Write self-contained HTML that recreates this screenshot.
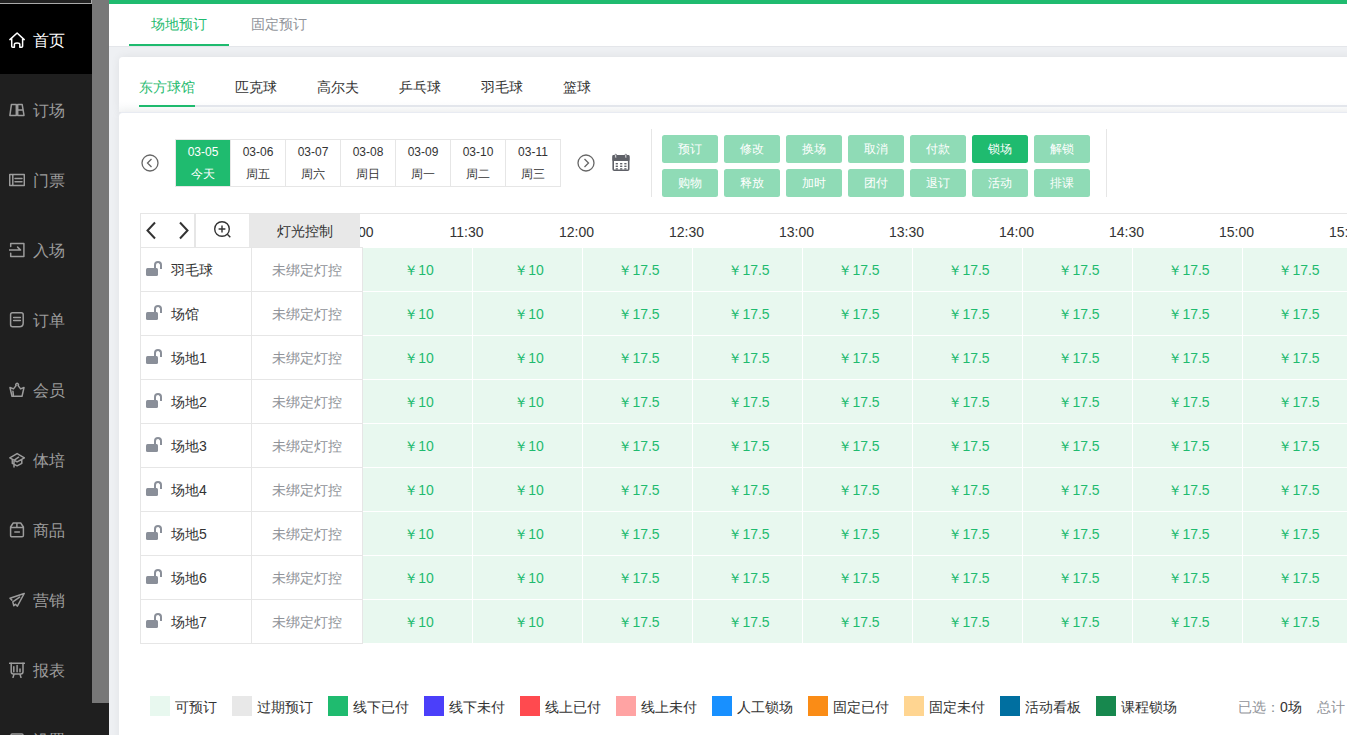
<!DOCTYPE html>
<html><head><meta charset="utf-8">
<style>
*{box-sizing:border-box;margin:0;padding:0}
html,body{width:1347px;height:735px;overflow:hidden;background:#eef0f3;font-family:"Liberation Sans",sans-serif;position:relative}
.abs{position:absolute}
#side{left:0;top:0;width:92px;height:735px;background:#1f1f1f}
#side .topbox{left:0;top:0;width:92px;height:4px;background:#212121;border-right:1px solid #a9a9a9;border-bottom:1px solid #a9a9a9}
#side .act{left:0;top:4px;width:92px;height:70px;background:#000}
.mi{position:absolute;left:0;width:92px;height:70px;color:#959595;font-size:16px}
.mi svg{position:absolute;left:9px;top:28px;width:16px;height:16px}
.mi span{position:absolute;left:33px;top:28px;line-height:18px;white-space:nowrap}
#sb{left:92px;top:0;width:17px;height:703px;background:#787878}
#sbt{left:92px;top:703px;width:17px;height:32px;background:#1f1f1f}
#greenbar{left:109px;top:0;width:1238px;height:4px;background:#1fbb6f}
#hdr{left:109px;top:4px;width:1238px;height:43px;background:#fff;border-bottom:1px solid #e4e6ea}
.t1{position:absolute;top:12px;font-size:14px;line-height:16px;white-space:nowrap}
#card1{left:119px;top:57px;width:1240px;height:55px;background:linear-gradient(to bottom,#fff 0,#fff 44px,#f7f8f9 55px);border-radius:4px 0 0 0;box-shadow:0 0 10px rgba(0,0,0,.07)}
#card2{left:119px;top:112px;width:1240px;height:640px;background:#fff;border-top:1px solid #e8ebf2;border-radius:4px 0 0 0;box-shadow:0 0 10px rgba(0,0,0,.06)}
.t2{position:absolute;top:22px;font-size:14px;line-height:16px;color:#333;white-space:nowrap}
.dc{position:absolute;top:139px;width:56px;height:48px;border:1px solid #e6e6e6;background:#fff;color:#333;text-align:center;font-size:12px}
.dc .d1{position:absolute;left:0;right:0;top:5px;line-height:14px}
.dc .d2{position:absolute;left:0;right:0;top:27px;line-height:14px}
.dc.on{background:#1fbb6f;border-right-color:#1fbb6f;color:#fff}
.btn{position:absolute;width:56px;height:28px;border-radius:2.5px;background:#8fdbb6;color:#fff;font-size:12px;line-height:28px;text-align:center}
.btn.on{background:#1fbb6f}
.tm{position:absolute;top:224px;width:80px;text-align:center;font-size:14px;line-height:16px;color:#333}
.rw{position:absolute;left:140px;width:222px;height:45px}
.c1{position:absolute;left:0;top:0;width:112px;height:45px;border:1px solid #e6e6e6;background:#fff}
.c1 span{position:absolute;left:30px;top:14px;font-size:14px;line-height:16px;color:#333;white-space:nowrap}
.c2{position:absolute;left:111px;top:0;width:112px;height:45px;border:1px solid #e6e6e6;background:#fff;text-align:center;font-size:14px;line-height:44px;color:#909399}
.lk{position:absolute;left:5px;top:20px;width:12px;height:8px;background:#8a8f99;border-radius:1.5px}
.lk:before{content:"";position:absolute;left:8px;top:-7px;width:8px;height:8px;border:2.5px solid #8a8f99;border-bottom:none;border-radius:5px 5px 0 0;box-sizing:border-box}
.sl{position:absolute;width:110px;height:44px;background:#e8f8ef;border-right:1px solid #fff;border-bottom:1px solid #fff;text-align:center;font-size:14px;line-height:45px;text-indent:3px;color:#1fbb6f}
.lg{position:absolute;top:696px;height:20px;white-space:nowrap}
.lg i{position:absolute;left:0;top:0;width:20px;height:20px}
.lg span{position:absolute;left:25px;top:3px;font-size:14px;line-height:16px;color:#333}
</style></head>
<body>
<div id="side" class="abs">
  <div class="abs topbox"></div>
  <div class="abs act"></div>
<div class="mi" style="top:4px;color:#fff"><svg viewBox="0 0 16 16"><path d="M0.9 7.6 L8.1 1 L15.2 7.6 M2.7 6.2 V14.2 Q2.7 15.2 3.7 15.2 H5.4 V12.3 Q5.4 10.9 8.1 10.9 Q10.8 10.9 10.8 12.3 V15.2 H12.5 Q13.6 15.2 13.6 14.2 V6.2" fill="none" stroke="currentColor" stroke-width="1.5" stroke-linejoin="round" stroke-linecap="round"/></svg><span>首页</span></div>
<div class="mi" style="top:74px;color:#9c9c9c"><svg viewBox="0 0 16 16"><path d="M2.4 2.6 H7.3 V13.4 H0.9 Z M8.7 2.6 H13.2 L15 13.4 H8.7 Z M8.7 8 H14.1" fill="none" stroke="currentColor" stroke-width="1.5" stroke-linejoin="round" stroke-linecap="round" stroke-width="1.4"/></svg><span>订场</span></div>
<div class="mi" style="top:144px;color:#9c9c9c"><svg viewBox="0 0 16 16"><path d="M0.7 2.6 H15.3 V13.4 H0.7 Z M3.8 2.6 V13.4 M6 6.4 H13 M6 9.7 H13" fill="none" stroke="currentColor" stroke-width="1.5" stroke-linejoin="round" stroke-linecap="round" stroke-width="1.4"/></svg><span>门票</span></div>
<div class="mi" style="top:214px;color:#9c9c9c"><svg viewBox="0 0 16 16"><path d="M1.7 4.6 V1.4 H14.9 V14.4 H1.7 V11.2 M0.2 7.9 H11.6 M8.6 5.1 L11.4 7.9" fill="none" stroke="currentColor" stroke-width="1.5" stroke-linejoin="round" stroke-linecap="round" stroke-width="1.4"/></svg><span>入场</span></div>
<div class="mi" style="top:284px;color:#9c9c9c"><svg viewBox="0 0 16 16"><path d="M3.4 0.8 H12.2 Q14.2 0.8 14.2 2.8 V11 Q14.2 14.8 10.4 14.8 H3.6 Q1.6 14.8 1.6 12.8 V2.8 Q1.6 0.8 3.4 0.8 Z M4.6 5.6 H11.4 M4.6 8.6 H11.4" fill="none" stroke="currentColor" stroke-width="1.5" stroke-linejoin="round" stroke-linecap="round"/></svg><span>订单</span></div>
<div class="mi" style="top:354px;color:#9c9c9c"><svg viewBox="0 0 16 16"><path d="M1 5.5 L4.5 6.9 L7.1 3.6 A1.3 1.3 0 1 1 9.1 3.6 L11.6 6.9 L15 5.5 L13 14.3 H3 Z M3.9 9.2 L4.4 13" fill="none" stroke="currentColor" stroke-width="1.5" stroke-linejoin="round" stroke-linecap="round"/></svg><span>会员</span></div>
<div class="mi" style="top:424px;color:#9c9c9c"><svg viewBox="0 0 16 16"><path d="M0.8 5.8 L8.1 1.6 L15.4 5.8 L8.1 9.8 Z M3.3 7.3 V11.3 L8.1 13.8 L12.8 11.3 V7.3 M9.6 5.2 L5 8.3 V15" fill="none" stroke="currentColor" stroke-width="1.5" stroke-linejoin="round" stroke-linecap="round"/></svg><span>体培</span></div>
<div class="mi" style="top:494px;color:#9c9c9c"><svg viewBox="0 0 16 16"><path d="M4.2 1 H11.7 L14.4 5 V13.4 Q14.4 14.8 13 14.8 H3 Q1.6 14.8 1.6 13.4 V5 Z M1.6 5.6 H14.4 M7.9 1 V5.6 M5.8 10 H10.4" fill="none" stroke="currentColor" stroke-width="1.5" stroke-linejoin="round" stroke-linecap="round"/></svg><span>商品</span></div>
<div class="mi" style="top:564px;color:#9c9c9c"><svg viewBox="0 0 16 16"><path d="M15.2 1.5 L1 6.3 L2.9 8.1 M15.2 1.5 L8.4 14.2 L6.5 12.2 L4.8 13.8 L3.8 9.8 L10.6 5.1" fill="none" stroke="currentColor" stroke-width="1.5" stroke-linejoin="round" stroke-linecap="round"/></svg><span>营销</span></div>
<div class="mi" style="top:634px;color:#9c9c9c"><svg viewBox="0 0 16 16"><path d="M0.4 1.3 H15.6" fill="none" stroke="currentColor" stroke-width="1.5" stroke-linejoin="round" stroke-linecap="round" stroke-width="1.9"/><path d="M2.2 1.3 V9.8 Q2.2 12 4.4 12 H11.8 Q14 12 14 9.8 V1.3 M5.1 12 L4 15.4 M10.9 12 L12 15.4 M4.8 4.8 V9.7 M8.1 3.5 V9.7 M11 7 V9.7" fill="none" stroke="currentColor" stroke-width="1.5" stroke-linejoin="round" stroke-linecap="round" stroke-width="1.4"/></svg><span>报表</span></div>
<div class="mi" style="top:704px;color:#9c9c9c"><svg viewBox="0 0 16 16"><path d="M3 2 H13 Q14 2 14 3 V14 H2 V3 Q2 2 3 2 Z" fill="none" stroke="currentColor" stroke-width="1.5" stroke-linejoin="round" stroke-linecap="round"/></svg><span>设置</span></div>
</div>
<div id="sb" class="abs"></div>
<div id="sbt" class="abs"></div>
<div id="greenbar" class="abs"></div>
<div id="hdr" class="abs">
  <div class="t1" style="left:42px;color:#1fbb6f">场地预订</div>
  <div class="t1" style="left:142px;color:#909399">固定预订</div>
  <div class="abs" style="left:20px;top:40px;width:100px;height:2px;background:#1fbb6f"></div>
</div>
<div id="card1" class="abs">
  <div class="t2" style="left:20px;color:#1fbb6f">东方球馆</div>
  <div class="t2" style="left:116px">匹克球</div>
  <div class="t2" style="left:198px">高尔夫</div>
  <div class="t2" style="left:280px">乒乓球</div>
  <div class="t2" style="left:362px">羽毛球</div>
  <div class="t2" style="left:444px">篮球</div>
  <div class="abs" style="left:20px;top:48px;width:1220px;height:2px;background:#e4e7ed"></div>
  <div class="abs" style="left:20px;top:48px;width:56px;height:2px;background:#1fbb6f"></div>
</div>
<div id="card2" class="abs"></div>
<!-- date nav -->
<svg class="abs" style="left:140px;top:153px" width="20" height="20" viewBox="0 0 20 20"><circle cx="10" cy="10" r="8" fill="none" stroke="#666" stroke-width="1.3"/><path d="M11.5 6 L7.5 10 L11.5 14" fill="none" stroke="#666" stroke-width="1.3"/></svg>
<div class="dc on" style="left:175px"><div class="d1">03-05</div><div class="d2">今天</div></div>
<div class="dc" style="left:230px"><div class="d1">03-06</div><div class="d2">周五</div></div>
<div class="dc" style="left:285px"><div class="d1">03-07</div><div class="d2">周六</div></div>
<div class="dc" style="left:340px"><div class="d1">03-08</div><div class="d2">周日</div></div>
<div class="dc" style="left:395px"><div class="d1">03-09</div><div class="d2">周一</div></div>
<div class="dc" style="left:450px"><div class="d1">03-10</div><div class="d2">周二</div></div>
<div class="dc" style="left:505px"><div class="d1">03-11</div><div class="d2">周三</div></div>
<svg class="abs" style="left:576px;top:153px" width="20" height="20" viewBox="0 0 20 20"><circle cx="10" cy="10" r="8" fill="none" stroke="#666" stroke-width="1.3"/><path d="M8.5 6 L12.5 10 L8.5 14" fill="none" stroke="#666" stroke-width="1.3"/></svg>
<svg class="abs" style="left:612px;top:153px" width="19" height="20" viewBox="0 0 19 20"><rect x="1.2" y="2.9" width="15.5" height="14.3" rx="1" fill="none" stroke="#5f6168" stroke-width="1.6"/><rect x="0.4" y="2.1" width="17.1" height="6" rx="1" fill="#5f6168"/><rect x="2.9" y="1.3" width="1.7" height="3.6" rx="0.6" fill="#fff" stroke="#5f6168" stroke-width="0.8"/><rect x="13" y="1.3" width="1.7" height="3.6" rx="0.6" fill="#fff" stroke="#5f6168" stroke-width="0.8"/><g fill="#5f6168"><rect x="3.7" y="10.0" width="2.2" height="1.4"/><rect x="8.1" y="10.0" width="2.2" height="1.4"/><rect x="12.3" y="10.0" width="2.2" height="1.4"/><rect x="3.7" y="12.6" width="2.2" height="1.4"/><rect x="8.1" y="12.6" width="2.2" height="1.4"/><rect x="12.3" y="12.6" width="2.2" height="1.4"/><rect x="3.7" y="15.2" width="2.2" height="1.4"/><rect x="8.1" y="15.2" width="2.2" height="1.4"/><rect x="12.3" y="15.2" width="2.2" height="1.4"/></g></svg>
<div class="abs" style="left:651px;top:129px;width:1px;height:68px;background:#e6e6e6"></div>
<div class="abs" style="left:1106px;top:129px;width:1px;height:68px;background:#e6e6e6"></div>
<div class="btn" style="left:662px;top:135px">预订</div>
<div class="btn" style="left:724px;top:135px">修改</div>
<div class="btn" style="left:786px;top:135px">换场</div>
<div class="btn" style="left:848px;top:135px">取消</div>
<div class="btn" style="left:910px;top:135px">付款</div>
<div class="btn on" style="left:972px;top:135px">锁场</div>
<div class="btn" style="left:1034px;top:135px">解锁</div>
<div class="btn" style="left:662px;top:169px">购物</div>
<div class="btn" style="left:724px;top:169px">释放</div>
<div class="btn" style="left:786px;top:169px">加时</div>
<div class="btn" style="left:848px;top:169px">团付</div>
<div class="btn" style="left:910px;top:169px">退订</div>
<div class="btn" style="left:972px;top:169px">活动</div>
<div class="btn" style="left:1034px;top:169px">排课</div>
<!-- table header -->
<div class="abs" style="left:140px;top:213px;width:1207px;height:35px;border-top:1px solid #e6e6e6;background:#fff"></div>
<div class="tm" style="left:316.5px">11:00</div>
<div class="tm" style="left:426.5px">11:30</div>
<div class="tm" style="left:536.5px">12:00</div>
<div class="tm" style="left:646.5px">12:30</div>
<div class="tm" style="left:756.5px">13:00</div>
<div class="tm" style="left:866.5px">13:30</div>
<div class="tm" style="left:976.5px">14:00</div>
<div class="tm" style="left:1086.5px">14:30</div>
<div class="tm" style="left:1196.5px">15:00</div>
<div class="tm" style="left:1306.5px">15:30</div>
<div class="abs" style="left:140px;top:213px;width:55px;height:35px;border:1px solid #e6e6e6;background:#fff"></div>
<div class="abs" style="left:195px;top:213px;width:55px;height:35px;border:1px solid #e6e6e6;background:#fff"></div>
<svg class="abs" style="left:145px;top:221px" width="45" height="19" viewBox="0 0 45 19"><path d="M10 1.5 L2.5 9.5 L10 17.5" fill="none" stroke="#333" stroke-width="2"/><path d="M35 1.5 L42.5 9.5 L35 17.5" fill="none" stroke="#333" stroke-width="2"/></svg>
<svg class="abs" style="left:212px;top:219px" width="22" height="22" viewBox="0 0 22 22"><circle cx="10" cy="10" r="7.3" fill="none" stroke="#333" stroke-width="1.4"/><path d="M10 6.6 V13.4 M6.6 10 H13.4" stroke="#333" stroke-width="1.4"/><path d="M15.3 15.3 L18.3 18.3" stroke="#333" stroke-width="1.4"/></svg>
<div class="abs" style="left:249px;top:213px;width:111px;height:35px;background:#e8e8e8;border-top:1px solid #e6e6e6;text-align:center;font-size:14px;line-height:35px;color:#333">灯光控制</div>
<div class="rw" style="top:247px"><div class="c1"><i class="lk"></i><span>羽毛球</span></div><div class="c2">未绑定灯控</div></div>
<div class="sl" style="left:363px;top:248px">￥10</div>
<div class="sl" style="left:473px;top:248px">￥10</div>
<div class="sl" style="left:583px;top:248px">￥17.5</div>
<div class="sl" style="left:693px;top:248px">￥17.5</div>
<div class="sl" style="left:803px;top:248px">￥17.5</div>
<div class="sl" style="left:913px;top:248px">￥17.5</div>
<div class="sl" style="left:1023px;top:248px">￥17.5</div>
<div class="sl" style="left:1133px;top:248px">￥17.5</div>
<div class="sl" style="left:1243px;top:248px">￥17.5</div>
<div class="rw" style="top:291px"><div class="c1"><i class="lk"></i><span>场馆</span></div><div class="c2">未绑定灯控</div></div>
<div class="sl" style="left:363px;top:292px">￥10</div>
<div class="sl" style="left:473px;top:292px">￥10</div>
<div class="sl" style="left:583px;top:292px">￥17.5</div>
<div class="sl" style="left:693px;top:292px">￥17.5</div>
<div class="sl" style="left:803px;top:292px">￥17.5</div>
<div class="sl" style="left:913px;top:292px">￥17.5</div>
<div class="sl" style="left:1023px;top:292px">￥17.5</div>
<div class="sl" style="left:1133px;top:292px">￥17.5</div>
<div class="sl" style="left:1243px;top:292px">￥17.5</div>
<div class="rw" style="top:335px"><div class="c1"><i class="lk"></i><span>场地1</span></div><div class="c2">未绑定灯控</div></div>
<div class="sl" style="left:363px;top:336px">￥10</div>
<div class="sl" style="left:473px;top:336px">￥10</div>
<div class="sl" style="left:583px;top:336px">￥17.5</div>
<div class="sl" style="left:693px;top:336px">￥17.5</div>
<div class="sl" style="left:803px;top:336px">￥17.5</div>
<div class="sl" style="left:913px;top:336px">￥17.5</div>
<div class="sl" style="left:1023px;top:336px">￥17.5</div>
<div class="sl" style="left:1133px;top:336px">￥17.5</div>
<div class="sl" style="left:1243px;top:336px">￥17.5</div>
<div class="rw" style="top:379px"><div class="c1"><i class="lk"></i><span>场地2</span></div><div class="c2">未绑定灯控</div></div>
<div class="sl" style="left:363px;top:380px">￥10</div>
<div class="sl" style="left:473px;top:380px">￥10</div>
<div class="sl" style="left:583px;top:380px">￥17.5</div>
<div class="sl" style="left:693px;top:380px">￥17.5</div>
<div class="sl" style="left:803px;top:380px">￥17.5</div>
<div class="sl" style="left:913px;top:380px">￥17.5</div>
<div class="sl" style="left:1023px;top:380px">￥17.5</div>
<div class="sl" style="left:1133px;top:380px">￥17.5</div>
<div class="sl" style="left:1243px;top:380px">￥17.5</div>
<div class="rw" style="top:423px"><div class="c1"><i class="lk"></i><span>场地3</span></div><div class="c2">未绑定灯控</div></div>
<div class="sl" style="left:363px;top:424px">￥10</div>
<div class="sl" style="left:473px;top:424px">￥10</div>
<div class="sl" style="left:583px;top:424px">￥17.5</div>
<div class="sl" style="left:693px;top:424px">￥17.5</div>
<div class="sl" style="left:803px;top:424px">￥17.5</div>
<div class="sl" style="left:913px;top:424px">￥17.5</div>
<div class="sl" style="left:1023px;top:424px">￥17.5</div>
<div class="sl" style="left:1133px;top:424px">￥17.5</div>
<div class="sl" style="left:1243px;top:424px">￥17.5</div>
<div class="rw" style="top:467px"><div class="c1"><i class="lk"></i><span>场地4</span></div><div class="c2">未绑定灯控</div></div>
<div class="sl" style="left:363px;top:468px">￥10</div>
<div class="sl" style="left:473px;top:468px">￥10</div>
<div class="sl" style="left:583px;top:468px">￥17.5</div>
<div class="sl" style="left:693px;top:468px">￥17.5</div>
<div class="sl" style="left:803px;top:468px">￥17.5</div>
<div class="sl" style="left:913px;top:468px">￥17.5</div>
<div class="sl" style="left:1023px;top:468px">￥17.5</div>
<div class="sl" style="left:1133px;top:468px">￥17.5</div>
<div class="sl" style="left:1243px;top:468px">￥17.5</div>
<div class="rw" style="top:511px"><div class="c1"><i class="lk"></i><span>场地5</span></div><div class="c2">未绑定灯控</div></div>
<div class="sl" style="left:363px;top:512px">￥10</div>
<div class="sl" style="left:473px;top:512px">￥10</div>
<div class="sl" style="left:583px;top:512px">￥17.5</div>
<div class="sl" style="left:693px;top:512px">￥17.5</div>
<div class="sl" style="left:803px;top:512px">￥17.5</div>
<div class="sl" style="left:913px;top:512px">￥17.5</div>
<div class="sl" style="left:1023px;top:512px">￥17.5</div>
<div class="sl" style="left:1133px;top:512px">￥17.5</div>
<div class="sl" style="left:1243px;top:512px">￥17.5</div>
<div class="rw" style="top:555px"><div class="c1"><i class="lk"></i><span>场地6</span></div><div class="c2">未绑定灯控</div></div>
<div class="sl" style="left:363px;top:556px">￥10</div>
<div class="sl" style="left:473px;top:556px">￥10</div>
<div class="sl" style="left:583px;top:556px">￥17.5</div>
<div class="sl" style="left:693px;top:556px">￥17.5</div>
<div class="sl" style="left:803px;top:556px">￥17.5</div>
<div class="sl" style="left:913px;top:556px">￥17.5</div>
<div class="sl" style="left:1023px;top:556px">￥17.5</div>
<div class="sl" style="left:1133px;top:556px">￥17.5</div>
<div class="sl" style="left:1243px;top:556px">￥17.5</div>
<div class="rw" style="top:599px"><div class="c1"><i class="lk"></i><span>场地7</span></div><div class="c2">未绑定灯控</div></div>
<div class="sl" style="left:363px;top:600px">￥10</div>
<div class="sl" style="left:473px;top:600px">￥10</div>
<div class="sl" style="left:583px;top:600px">￥17.5</div>
<div class="sl" style="left:693px;top:600px">￥17.5</div>
<div class="sl" style="left:803px;top:600px">￥17.5</div>
<div class="sl" style="left:913px;top:600px">￥17.5</div>
<div class="sl" style="left:1023px;top:600px">￥17.5</div>
<div class="sl" style="left:1133px;top:600px">￥17.5</div>
<div class="sl" style="left:1243px;top:600px">￥17.5</div>
<div class="lg" style="left:150px"><i style="background:#e8f8ef"></i><span>可预订</span></div>
<div class="lg" style="left:232px"><i style="background:#e8e8e8"></i><span>过期预订</span></div>
<div class="lg" style="left:328px"><i style="background:#1fbb6f"></i><span>线下已付</span></div>
<div class="lg" style="left:424px"><i style="background:#4b3ffa"></i><span>线下未付</span></div>
<div class="lg" style="left:520px"><i style="background:#ff4a4f"></i><span>线上已付</span></div>
<div class="lg" style="left:616px"><i style="background:#ffa3a3"></i><span>线上未付</span></div>
<div class="lg" style="left:712px"><i style="background:#1890ff"></i><span>人工锁场</span></div>
<div class="lg" style="left:808px"><i style="background:#fa8c16"></i><span>固定已付</span></div>
<div class="lg" style="left:904px"><i style="background:#ffd591"></i><span>固定未付</span></div>
<div class="lg" style="left:1000px"><i style="background:#006fa0"></i><span>活动看板</span></div>
<div class="lg" style="left:1096px"><i style="background:#17884e"></i><span>课程锁场</span></div>
<div class="abs" style="left:1238px;top:699px;font-size:14px;line-height:16px;white-space:nowrap;color:#909399">已选：<span style="color:#333">0场</span><span style="margin-left:15px">总计</span></div>
</body></html>
